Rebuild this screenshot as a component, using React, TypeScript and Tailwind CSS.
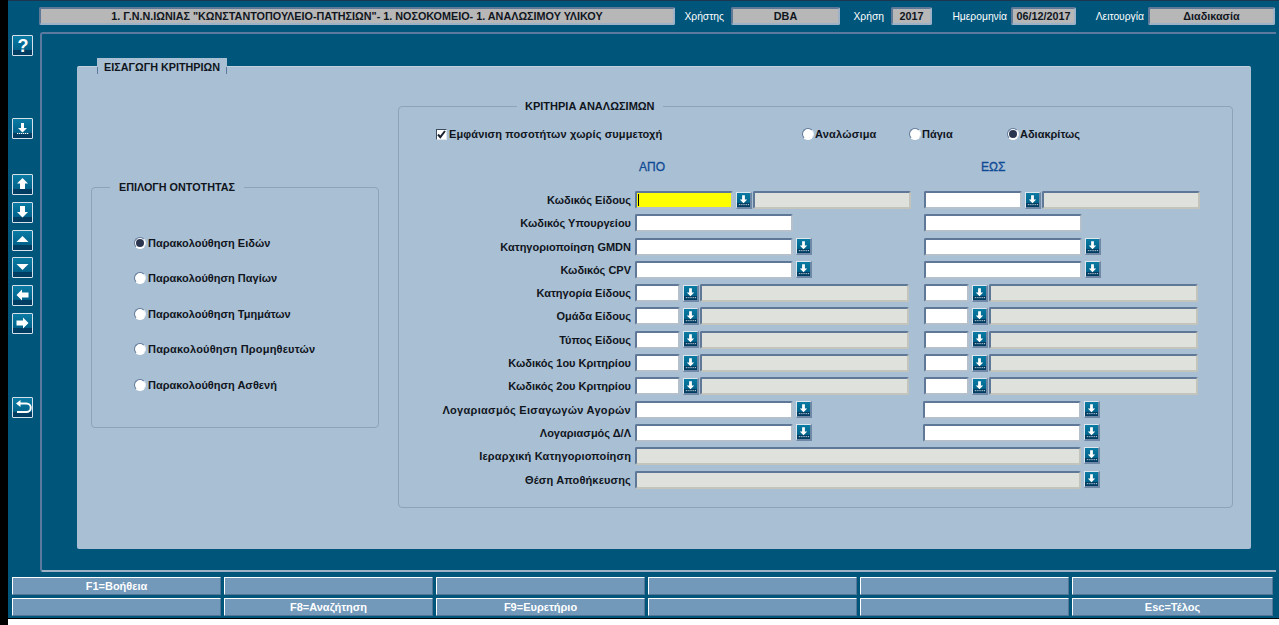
import React from "react";

const GRAD = "bg-[linear-gradient(#0a7ba3_0%,#00628a_72%,#003d63_72%,#003d63_100%)]";
const TXT = "text-[11px] font-bold text-[#10151d] whitespace-nowrap";
const CAPS = "text-[10.8px] font-bold text-[#10151d] whitespace-nowrap";

function ToolIcon({ kind }: { kind: string }) {
  const c = "#ffffff";
  const map: Record<string, React.ReactNode> = {
    help: <text x="10" y="16" textAnchor="middle" fontFamily="'Liberation Sans',sans-serif" fontWeight="700" fontSize="18" fill={c}>?</text>,
    dl: (
      <>
        <path d="M8 4h3v5h3l-4.500 4.500L5 9h3z" fill={c} />
        <path d="M4 14.500h1.300M6 14.500h1.300M8 14.500h1.300M10 14.500h1.300M12 14.500h1.300M14 14.500h1.300" stroke={c} strokeWidth="1" />
      </>
    ),
    up: <path d="M9.500 3l5.500 5.500h-3V14H7V8.500H4z" fill={c} />,
    down: <path d="M7 3h5v6h3l-5.500 5.500L4 9h3z" fill={c} />,
    first: <path d="M9.500 5l6 6H3.500z" fill={c} />,
    last: <path d="M3.500 6h12l-6 6z" fill={c} />,
    left: <path d="M3.500 9l5.500-5.500v3h6.500v5H9v3z" fill={c} />,
    right: <path d="M15.500 9L10 3.500v3H3.500v5H10v3z" fill={c} />,
    back: (
      <>
        <path d="M7 5.500h6.500a3.500 3.500 0 0 1 0 8.500H4" fill="none" stroke={c} strokeWidth="2" />
        <path d="M7.500 2v7L3 5.500z" fill={c} />
      </>
    ),
  };
  return (
    <svg viewBox="0 0 19 19" className="w-full h-full block">
      {map[kind]}
    </svg>
  );
}

function ToolBtn({ kind, cls }: { kind: string; cls: string }) {
  return (
    <div className={`w-[21px] h-[21px] border border-[#d5e0ea] rounded-[1px] ${GRAD} ${cls}`}>
      <ToolIcon kind={kind} />
    </div>
  );
}

function LovBtn() {
  return (
    <div className={`w-[16px] h-[17px] shrink-0 border-t border-l border-[#dfe7ee] border-r-2 border-b-2 border-r-[#6f88a6] border-b-[#6f88a6] ${GRAD}`}>
      <svg viewBox="0 0 14 14" className="w-full h-full block">
        <path d="M5.500 2h3v4.500H11L7 10.500 3 6.500h2.500z" fill="#fff" />
        <path d="M2 12h1M4 12h1M6 12h1M8 12h1M10 12h1M12 12h1" stroke="#fff" strokeWidth="1" />
      </svg>
    </div>
  );
}

function Input({ w, tone = "white", caret = false }: { w: string; tone?: "white" | "gray" | "yellow"; caret?: boolean }) {
  const bg =
    tone === "white"
      ? "bg-white border-r-[#b4c0cc] border-b-[#b4c0cc]"
      : tone === "yellow"
      ? "bg-[#ffff00] border-r-[#b4c0cc] border-b-[#b4c0cc]"
      : "bg-[#dfe1dd] border-r-[#c3c5bc] border-b-[#c3c5bc]";
  return (
    <div className={`${w} h-[18px] shrink-0 rounded-[2px] border-2 border-t-[#5f7898] border-l-[#5f7898] ${bg} flex items-center`}>
      {caret ? <div className="w-px h-[12px] bg-black ml-[1px]" /> : null}
    </div>
  );
}

type Cell = "code" | "wide" | "wideBtn" | "short";

function FieldCell({ type, caret }: { type: Cell; caret?: boolean }) {
  if (type === "code")
    return (
      <div className="flex items-center">
        <Input w="w-[98px]" tone={caret ? "yellow" : "white"} caret={caret} />
        <div className="ml-[3px]"><LovBtn /></div>
        <div className="ml-[1px]"><Input w="w-[158px]" tone="gray" /></div>
      </div>
    );
  if (type === "wide") return <Input w="w-[158px]" />;
  if (type === "wideBtn")
    return (
      <div className="flex items-center">
        <Input w="w-[158px]" />
        <div className="ml-[3px]"><LovBtn /></div>
      </div>
    );
  return (
    <div className="flex items-center">
      <Input w="w-[45px]" />
      <div className="ml-[3px]"><LovBtn /></div>
      <div className="ml-[1px]"><Input w="w-[209px]" tone="gray" /></div>
    </div>
  );
}

const rows: { label: string; type: Cell; fit?: string }[] = [
  { label: "Κωδικός Είδους", type: "code" },
  { label: "Κωδικός Υπουργείου", type: "wide" },
  { label: "Κατηγοριοποίηση GMDN", type: "wideBtn" },
  { label: "Κωδικός CPV", type: "wideBtn" },
  { label: "Κατηγορία Είδους", type: "short" },
  { label: "Ομάδα Είδους", type: "short" },
  { label: "Τύπος Είδους", type: "short" },
  { label: "Κωδικός 1ου Κριτηρίου", type: "short" },
  { label: "Κωδικός 2ου Κριτηρίου", type: "short" },
  { label: "Λογαριασμός Εισαγωγών Αγορών", type: "wideBtn", fit: "tracking-[0.3px]" },
  { label: "Λογαριασμός Δ/Λ", type: "wideBtn" },
];

function Radio({ on = false }: { on?: boolean }) {
  return (
    <div className="w-[12px] h-[12px] rounded-full bg-white border border-t-[#5f7898] border-l-[#5f7898] border-r-[#e8eef3] border-b-white flex items-center justify-center shrink-0">
      {on ? <div className="w-[8px] h-[8px] rounded-full bg-[#2a3550]" /> : null}
    </div>
  );
}

function Label({ children, fit = "" }: { children: React.ReactNode; fit?: string }) {
  return <div className={`w-[232px] text-right leading-[18px] ${TXT} ${fit}`}>{children}</div>;
}

const entities = ["Παρακολούθηση Ειδών", "Παρακολούθηση Παγίων", "Παρακολούθηση Τμημάτων", "Παρακολούθηση Προμηθευτών", "Παρακολούθηση Ασθενή"];

const fkeys = ["F1=Βοήθεια", "", "", "", "", "", "", "F8=Αναζήτηση", "F9=Ευρετήριο", "", "", "Esc=Τέλος"];

function Box({ w, children }: { w: string; children: string }) {
  return (
    <div className={`${w} h-[18px] shrink-0 bg-[#b7b7b7] rounded-[2px] border-2 border-t-[#5f7898] border-l-[#5f7898] border-r-[#9db2c6] border-b-[#9db2c6] flex items-center justify-center pt-[1px] ${CAPS}`}>
      {children}
    </div>
  );
}

function TopLabel({ w, pr, children }: { w: string; pr: string; children: string }) {
  return <div className={`${w} ${pr} h-[18px] flex items-center justify-end pt-[1px] text-[10.3px] text-white whitespace-nowrap`}>{children}</div>;
}

export default function App() {
  return (
    <div className="flex w-[1279px] h-[625px] bg-white overflow-hidden font-['Liberation_Sans',Arial,sans-serif]">
      <div className="w-[8px] bg-black shrink-0" />
      <div className="w-[1271px]">
        <div className="bg-[#00557a] h-[619px] border-t border-t-[#1c3650] border-b border-b-black flex flex-col">
          {/* top bar */}
          <div className="flex pl-[31px] pt-[6px] h-[31px]">
            <Box w="w-[636px]">{'1. Γ.Ν.Ν.ΙΩΝΙΑΣ "ΚΩΝΣΤΑΝΤΟΠΟΥΛΕΙΟ-ΠΑΤΗΣΙΩΝ"- 1. ΝΟΣΟΚΟΜΕΙΟ- 1. ΑΝΑΛΩΣΙΜΟΥ ΥΛΙΚΟΥ'}</Box>
            <TopLabel w="w-[56px]" pr="pr-[7px]">Χρήστης</TopLabel>
            <Box w="w-[109px]">DBA</Box>
            <TopLabel w="w-[51px]" pr="pr-[7px]">Χρήση</TopLabel>
            <Box w="w-[41px]">2017</Box>
            <TopLabel w="w-[79px]" pr="pr-[4px]">Ημερομηνία</TopLabel>
            <Box w="w-[65px]">06/12/2017</Box>
            <TopLabel w="w-[72px]" pr="pr-[4px]">Λειτουργία</TopLabel>
            <Box w="w-[127px]">Διαδικασία</Box>
          </div>
          {/* middle */}
          <div className="flex h-[541px]">
            <div className="w-[32px] pl-[4px] flex flex-col shrink-0">
              <ToolBtn kind="help" cls="mt-[3px]" />
              <ToolBtn kind="dl" cls="mt-[62px]" />
              <ToolBtn kind="up" cls="mt-[35px]" />
              <ToolBtn kind="down" cls="mt-[7px]" />
              <ToolBtn kind="first" cls="mt-[7px]" />
              <ToolBtn kind="last" cls="mt-[6px]" />
              <ToolBtn kind="left" cls="mt-[7px]" />
              <ToolBtn kind="right" cls="mt-[7px]" />
              <ToolBtn kind="back" cls="mt-[63px]" />
            </div>
            <div className="w-[1236px] h-[540px] border-l-2 border-t-2 border-[#5c7a9e] border-b-2 border-b-[#9fb2c6] rounded-tl-[3px] rounded-bl-[3px] pl-[35px] pt-[32px]">
              {/* light panel */}
              <div className="relative w-[1174px] h-[483px] bg-[#a9bfd3] border-t border-[#c0d0de] rounded-[2px] flex items-start">
                <div className={`absolute left-[20px] top-[-9px] w-[130px] h-[16px] bg-[#a9bfd3] flex items-center justify-center pt-[3px] ${CAPS} text-[10.6px]`}>
                  ΕΙΣΑΓΩΓΗ ΚΡΙΤΗΡΙΩΝ
                  <div className="absolute left-0 top-[9px] w-px h-[7px] bg-[#5c7a9e]" />
                  <div className="absolute right-0 top-[9px] w-px h-[7px] bg-[#5c7a9e]" />
                </div>
                {/* entity group */}
                <div className="relative ml-[14px] mt-[120px] w-[288px] h-[241px] border border-[#8ea3b8] rounded-[4px] pl-[42px] pt-[37px] shrink-0">
                  <div className={`absolute left-[18px] top-[-8px] bg-[#a9bfd3] px-[9px] leading-[14px] ${CAPS}`}>
                    ΕΠΙΛΟΓΗ ΟΝΤΟΤΗΤΑΣ
                  </div>
                  {entities.map((t, i) => (
                    <div key={t} className="flex items-center h-[35.5px]">
                      <Radio on={i === 0} />
                      <div className={`ml-[2px] ${TXT} ${i === 3 ? "tracking-[0.2px]" : ""}`}>{t}</div>
                    </div>
                  ))}
                </div>
                {/* criteria group */}
                <div className="relative ml-[19px] mt-[39px] w-[835px] h-[402px] border border-[#8ea3b8] rounded-[4px] shrink-0">
                  <div className={`absolute left-[118px] top-[-8px] bg-[#a9bfd3] px-[8px] leading-[14px] ${TXT}`}>
                    ΚΡΙΤΗΡΙΑ ΑΝΑΛΩΣΙΜΩΝ
                  </div>
                  <div className="flex items-center h-[14px] mt-[20px] pl-[37px]">
                    <div className="w-[11px] h-[11px] bg-white border border-t-[#3a4a60] border-l-[#3a4a60] border-r-[#dfe7ee] border-b-[#dfe7ee] shrink-0">
                      <svg viewBox="0 0 9 9" className="w-full h-full block">
                        <path d="M1 4.500l2.300 2.700L8 1" fill="none" stroke="#1a2230" strokeWidth="2" />
                      </svg>
                    </div>
                    <div className={`ml-[2px] w-[353px] tracking-[0.12px] ${TXT}`}>Εμφάνιση ποσοτήτων χωρίς συμμετοχή</div>
                    <Radio />
                    <div className={`ml-[1px] w-[94px] tracking-[0.2px] ${TXT}`}>Αναλώσιμα</div>
                    <Radio />
                    <div className={`ml-[1px] w-[85px] ${TXT}`}>Πάγια</div>
                    <Radio on />
                    <div className={`ml-[1px] ${TXT}`}>Αδιακρίτως</div>
                  </div>
                  <div className="flex h-[16px] mt-[18px] text-[12px] leading-[16px] text-[#0f4a96] [-webkit-text-stroke:0.3px_#0f4a96]">
                    <div className="ml-[240px] w-[342px]">ΑΠΟ</div>
                    <div>ΕΩΣ</div>
                  </div>
                  <div className="mt-[16px]">
                    {rows.map((r, i) => (
                      <div key={r.label} className="grid grid-cols-[236px_289px_1fr] h-[23.3px] items-start">
                        <Label fit={r.fit}>{r.label}</Label>
                        <FieldCell type={r.type} caret={i === 0} />
                        <div className={i >= 9 ? "-ml-[1px]" : ""}>
                          <FieldCell type={r.type} />
                        </div>
                      </div>
                    ))}
                    {["Ιεραρχική Κατηγοριοποίηση", "Θέση Αποθήκευσης"].map((t) => (
                      <div key={t} className="flex h-[23.3px] items-start">
                        <div className="w-[236px] shrink-0"><Label fit="tracking-[0.15px]">{t}</Label></div>
                        <Input w="w-[446px]" tone="gray" />
                        <div className="ml-[3px]"><LovBtn /></div>
                      </div>
                    ))}
                  </div>
                </div>
              </div>
            </div>
          </div>
          {/* function keys */}
          <div className="grid grid-cols-[209px_209px_209px_209px_209px_201px] gap-x-[3px] gap-y-[3px] pl-[4px] pt-[4px] grid-rows-[18px_18px]">
            {fkeys.map((k, i) => (
              <div key={i} className="bg-[#7298ba] border border-t-white border-l-white border-r-[#557596] border-b-[#557596] rounded-[1px] flex items-center justify-center text-[11px] font-bold text-white whitespace-nowrap">
                {k}
              </div>
            ))}
          </div>
        </div>
      </div>
    </div>
  );
}
